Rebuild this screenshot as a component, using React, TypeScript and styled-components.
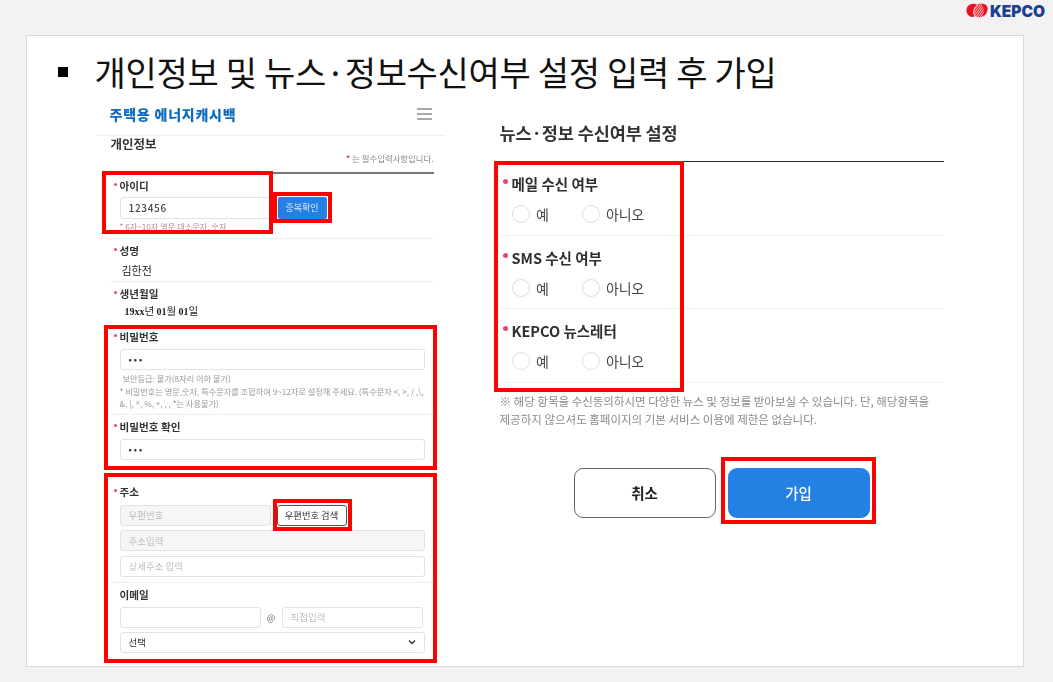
import React from "react";
import styled, { createGlobalStyle } from "styled-components";

const Global = createGlobalStyle`
  html, body { margin: 0; padding: 0; background: #f2f2f2; }
  body { font-family: "Noto Sans CJK KR", "Noto Sans", sans-serif; color: #222; }
  * { box-sizing: border-box; }
`;

const Page = styled.div`
  width: 1053px;
  height: 682px;
  display: flex;
  flex-direction: column;
  overflow: hidden;
`;
const TopBar = styled.header`
  height: 35px;
  display: flex;
  justify-content: flex-end;
  align-items: flex-start;
  padding: 3px 8px 0 0;
  gap: 2px;
`;
const LogoText = styled.span`
  font-family: Inter, "Liberation Sans", sans-serif;
  font-weight: 900;
  font-size: 15.5px;
  line-height: 18px;
  letter-spacing: 0;
  color: #1c3f94;
`;
const Slide = styled.main`
  width: 998px;
  height: 632px;
  margin-left: 26px;
  background: #fff;
  border: 1.5px solid #d9d9d9;
  overflow: hidden;
`;
const Heading = styled.h1`
  height: 63.5px;
  margin: 0;
  padding: 8px 0 0 31px;
  display: flex;
  align-items: center;
  font-weight: 400;
  font-size: 34px;
  letter-spacing: -0.31px;
  color: #111;
`;
const HeadingMark = styled.i`
  width: 9.5px;
  height: 10px;
  background: #000;
  margin: 1px 27px 0 0;
`;
const Columns = styled.div`
  display: flex;
  padding-left: 68.5px;
  gap: 54px;
`;
const Panel = styled.section<{ $w: number }>`
  position: relative;
  width: ${(p) => p.$w}px;
`;
const Shot = styled.div`
  filter: blur(0.35px);
`;
const Highlight = styled.div<{ $x: number; $y: number; $w: number; $h: number }>`
  position: absolute;
  left: ${(p) => p.$x}px;
  top: ${(p) => p.$y}px;
  width: ${(p) => p.$w}px;
  height: ${(p) => p.$h}px;
  border: 4px solid #fe0000;
  pointer-events: none;
`;

const FormHeader = styled.div`
  height: 36px;
  padding: 0 14px;
  border-bottom: 1px solid #eee;
  display: flex;
  align-items: center;
  justify-content: space-between;
  width: 350px;
`;
const Brand = styled.div`
  font-size: 14px;
  line-height: 16px;
  font-weight: 900;
  color: #0f6cbd;
  letter-spacing: 0.78px;
  margin-top: -6px;
`;
const Burger = styled.svg`
  margin-top: -6px;
`;
const SectionHead = styled.div`
  width: 324px;
  margin-left: 14px;
  height: 38px;
  border-bottom: 2px solid #777;
`;
const SectionTitle = styled.div`
  font-size: 12.5px;
  line-height: 16px;
  font-weight: 700;
  color: #333;
  margin-left: 1px;
`;
const Required = styled.div`
  font-size: 8.4px;
  line-height: 12px;
  text-align: right;
  color: #888;
`;
const Star = styled.span`
  color: #e8476a;
  font-weight: 700;
`;
const Row = styled.div<{ $pb: number; $plain?: boolean }>`
  width: 324px;
  margin-left: 14px;
  padding: 5px 9px ${(p) => p.$pb}px 10px;
  border-bottom: 1px solid ${(p) => (p.$plain ? "transparent" : "#eee")};
`;
const Label = styled.div<{ $req?: boolean }>`
  position: relative;
  font-size: 10.6px;
  line-height: 14px;
  font-weight: 700;
  color: #333;
  display: flex;
  align-items: center;
  &::before {
    content: "";
    display: ${(p) => (p.$req ? "block" : "none")};
    width: 3.5px;
    height: 3.5px;
    border-radius: 50%;
    background: #e8476a;
    margin: -2px 2.5px 0 -6px;
  }
`;
const Line = styled.div<{ $mt?: number }>`
  display: flex;
  align-items: center;
  gap: 6px;
  margin-top: ${(p) => p.$mt ?? 5}px;
`;
const Stack = styled.div<{ $gap: number; $mt?: number }>`
  display: flex;
  flex-direction: column;
  gap: ${(p) => p.$gap}px;
  margin-top: ${(p) => p.$mt ?? 5}px;
`;
const Field = styled.div<{ $w?: number; $tall?: boolean; $fill?: boolean; $tone?: "ph" | "val" }>`
  width: ${(p) => (p.$w ? `${p.$w}px` : "100%")};
  flex: none;
  height: ${(p) => (p.$tall ? 22 : 21)}px;
  border: 1px solid #e2e2e2;
  border-radius: 3px;
  background: ${(p) => (p.$fill ? "#f6f6f6" : "#fff")};
  padding: 0 8px;
  font-size: 9.5px;
  color: ${(p) => (p.$tone === "val" ? "#333" : "#c0c0c0")};
  display: flex;
  align-items: center;
  justify-content: space-between;
`;
const FieldValue = styled.span`
  font-size: 10px;
  letter-spacing: 0.7px;
  font-weight: 500;
  color: #444;
`;
const Dots = styled.span`
  font-size: 9px;
  letter-spacing: 2px;
  font-weight: 500;
  color: #333;
`;
const BlueButton = styled.button`
  width: 49px;
  height: 22px;
  flex: none;
  border: none;
  border-radius: 2px;
  background: #2580e3;
  color: #d7e8fb;
  font: 400 9px "Noto Sans CJK KR", sans-serif;
  padding: 0;
`;
const OutlineButton = styled.button`
  width: 70px;
  height: 21px;
  flex: none;
  border: 1px solid #555;
  border-radius: 3px;
  background: #fff;
  color: #333;
  font: 400 9.3px "Noto Sans CJK KR", sans-serif;
  padding: 0;
`;
const Help = styled.div<{ $mt?: number; $ml?: number }>`
  font-size: 8.2px;
  line-height: 12px;
  color: #999;
  margin-top: ${(p) => p.$mt ?? 0}px;
  margin-left: ${(p) => p.$ml ?? 0}px;
  white-space: nowrap;
`;
const Name = styled.div`
  font-size: 11px;
  line-height: 16px;
  margin: 4px 0 0 2px;
  color: #222;
`;
const Birth = styled.div`
  font-size: 10.5px;
  line-height: 16px;
  margin: 2px 0 0 5px;
  color: #222;
`;
const BirthNum = styled.span`
  font-family: "Liberation Serif", serif;
  font-size: 10px;
  font-weight: 700;
`;
const At = styled.span`
  width: 9px;
  font-size: 9px;
  color: #666;
  text-align: center;
`;

const NewsTitle = styled.h2`
  margin: 0;
  padding-top: 21px;
  height: 62.5px;
  border-bottom: 1.5px solid #2a2a2e;
  font-size: 17.5px;
  line-height: 24px;
  font-weight: 700;
  color: #333;
  letter-spacing: -0.1px;
  width: 444px;
`;
const NewsRow = styled.div`
  height: 73.5px;
  padding: 12px 0 0 12px;
  border-bottom: 1.5px solid #f1f1f1;
`;
const NewsLabel = styled.div`
  position: relative;
  font-size: 14.5px;
  line-height: 20px;
  font-weight: 700;
  color: #2e2e33;
  letter-spacing: 0;
  display: flex;
  align-items: center;
  &::before {
    content: "";
    width: 5px;
    height: 5px;
    border-radius: 50%;
    background: #e8476a;
    margin: -5px 4px 0 -9px;
  }
`;
const Options = styled.div`
  display: flex;
  margin-top: 11px;
`;
const Option = styled.label<{ $w?: number }>`
  display: flex;
  align-items: center;
  gap: 6.5px;
  width: ${(p) => p.$w ?? 70}px;
  font-size: 14px;
  line-height: 18px;
  color: #444;
  letter-spacing: -0.2px;
`;
const Radio = styled.i`
  width: 18px;
  height: 18px;
  border: 1px solid #dcdcdc;
  border-radius: 50%;
  background: #fff;
  flex: none;
`;
const Note = styled.p`
  margin: 9px 0 0;
  font-size: 11.5px;
  line-height: 18px;
  color: #8a8a8a;
  letter-spacing: 0;
  white-space: nowrap;
`;
const Actions = styled.div`
  display: flex;
  justify-content: center;
  gap: 12px;
  margin-top: 40px;
`;
const BigButton = styled.button<{ $primary?: boolean }>`
  width: 142px;
  height: 50px;
  border-radius: 9px;
  border: ${(p) => (p.$primary ? "none" : "1px solid #666")};
  background: ${(p) => (p.$primary ? "#2580e3" : "#fff")};
  color: ${(p) => (p.$primary ? "#fff" : "#222")};
  font: ${(p) => (p.$primary ? 500 : 700)} 14.5px "Noto Sans CJK KR", sans-serif;
  padding: 0;
`;

function Logo() {
  return (
    <svg width="22" height="15" viewBox="0 0 24 16">
      <defs>
        <pattern id="st" width="2" height="2" patternUnits="userSpaceOnUse" patternTransform="rotate(-55)">
          <rect width="2" height="1.1" fill="#e8202e" />
          <rect y="1.1" width="2" height="0.9" fill="#f9a9ae" />
        </pattern>
      </defs>
      <path d="M12 1.5 C8 -0.5 3 0.5 1 5 C-0.5 9 1.5 14 6 15 C7.5 15.2 8.5 15 9.5 14.3 C6.5 11 8 5 12 1.5Z" fill="#e4131f" />
      <path d="M12.5 1.2 C16 -0.4 21 0.2 23 4 C24.5 8 22.5 13 18 14.8 C15 15.8 12 15.4 10.2 14 C7.5 10.5 9 4.5 12.5 1.2Z" fill="url(#st)" />
      <path d="M17 0.6 C20 0.4 22.4 2 23.3 4.5 C24 8 22 12.5 18.5 14.5 C20 10 20 5 17 0.6Z" fill="#e4131f" />
    </svg>
  );
}

function News({ label }: { label: string }) {
  return (
    <NewsRow>
      <NewsLabel>{label}</NewsLabel>
      <Options>
        <Option><Radio />예</Option>
        <Option $w={80}><Radio />아니오</Option>
      </Options>
    </NewsRow>
  );
}

export default function App() {
  return (
    <Page>
      <Global />
      <TopBar>
        <Logo />
        <LogoText>KEPCO</LogoText>
      </TopBar>
      <Slide>
        <Heading>
          <HeadingMark />
          개인정보 및 뉴스·정보수신여부 설정 입력 후 가입
        </Heading>
        <Columns>
          <Panel $w={350}>
            <Shot>
              <FormHeader>
                <Brand>주택용 에너지캐시백</Brand>
                <Burger width="15" height="12" viewBox="0 0 15 12">
                  <path d="M0 1h15M0 6h15M0 11h15" stroke="#555" strokeWidth="1" fill="none" />
                </Burger>
              </FormHeader>
              <SectionHead>
                <SectionTitle>개인정보</SectionTitle>
                <Required><Star>*</Star> 는 필수입력사항입니다.</Required>
              </SectionHead>
              <Row $pb={6}>
                <Label $req>아이디</Label>
                <Line $mt={4}>
                  <Field $w={152} $tall $tone="val"><FieldValue>123456</FieldValue></Field>
                  <BlueButton>중복확인</BlueButton>
                </Line>
                <Help $mt={1}>* 6자~10자 영문 대소문자, 숫자</Help>
              </Row>
              <Row $pb={3}>
                <Label $req>성명</Label>
                <Name>김한전</Name>
              </Row>
              <Row $pb={4} $plain>
                <Label $req>생년월일</Label>
                <Birth><BirthNum>19xx</BirthNum>년 <BirthNum>01</BirthNum>월 <BirthNum>01</BirthNum>일</Birth>
              </Row>
              <Row $pb={5}>
                <Label $req>비밀번호</Label>
                <Line><Field $tone="val"><Dots>•••</Dots></Field></Line>
                <Help $mt={2} $ml={3}>보안등급: 불가(8자리 이하 불가)</Help>
                <Help $mt={1}>* 비밀번호는 영문,숫자, 특수문자를 조합하여 9~12자로 설정해 주세요. (특수문자 &lt;, &gt;, / ,\,</Help>
                <Help>&amp;, |, ^, %, +, , , *는 사용불가)</Help>
              </Row>
              <Row $pb={19} $plain>
                <Label $req>비밀번호 확인</Label>
                <Line><Field $tone="val"><Dots>•••</Dots></Field></Line>
              </Row>
              <Row $pb={5}>
                <Label $req>주소</Label>
                <Stack $gap={4.5} $mt={6}>
                  <Line $mt={0}>
                    <Field $w={151} $fill>우편번호</Field>
                    <OutlineButton>우편번호 검색</OutlineButton>
                  </Line>
                  <Field $fill>주소입력</Field>
                  <Field>상세주소 입력</Field>
                </Stack>
              </Row>
              <Row $pb={0} $plain>
                <Label>이메일</Label>
                <Stack $gap={4}>
                  <Line $mt={0}>
                    <Field $w={141} />
                    <At>@</At>
                    <Field $w={141}>직접입력</Field>
                  </Line>
                  <Field $tone="val">
                    선택
                    <svg width="8" height="6" viewBox="0 0 8 6">
                      <path d="M1 1.5 4 4.5 7 1.5" stroke="#333" strokeWidth="1.4" fill="none" />
                    </svg>
                  </Field>
                </Stack>
              </Row>
            </Shot>
            <Highlight $x={6} $y={71} $w={171} $h={63} />
            <Highlight $x={177} $y={92} $w={59} $h={31} />
            <Highlight $x={8} $y={225} $w={333} $h={145} />
            <Highlight $x={8} $y={373} $w={333} $h={190} />
            <Highlight $x={177} $y={399} $w={79} $h={32} />
          </Panel>
          <Panel $w={444}>
            <Shot>
              <NewsTitle>뉴스·정보 수신여부 설정</NewsTitle>
              <News label="메일 수신 여부" />
              <News label="SMS 수신 여부" />
              <News label="KEPCO 뉴스레터" />
              <Note>
                ※ 해당 항목을 수신동의하시면 다양한 뉴스 및 정보를 받아보실 수 있습니다. 단, 해당항목을
                <br />
                제공하지 않으셔도 홈페이지의 기본 서비스 이용에 제한은 없습니다.
              </Note>
              <Actions>
                <BigButton>취소</BigButton>
                <BigButton $primary>가입</BigButton>
              </Actions>
            </Shot>
            <Highlight $x={-6} $y={61} $w={190} $h={231} />
            <Highlight $x={221} $y={357} $w={155} $h={67} />
          </Panel>
        </Columns>
      </Slide>
    </Page>
  );
}
